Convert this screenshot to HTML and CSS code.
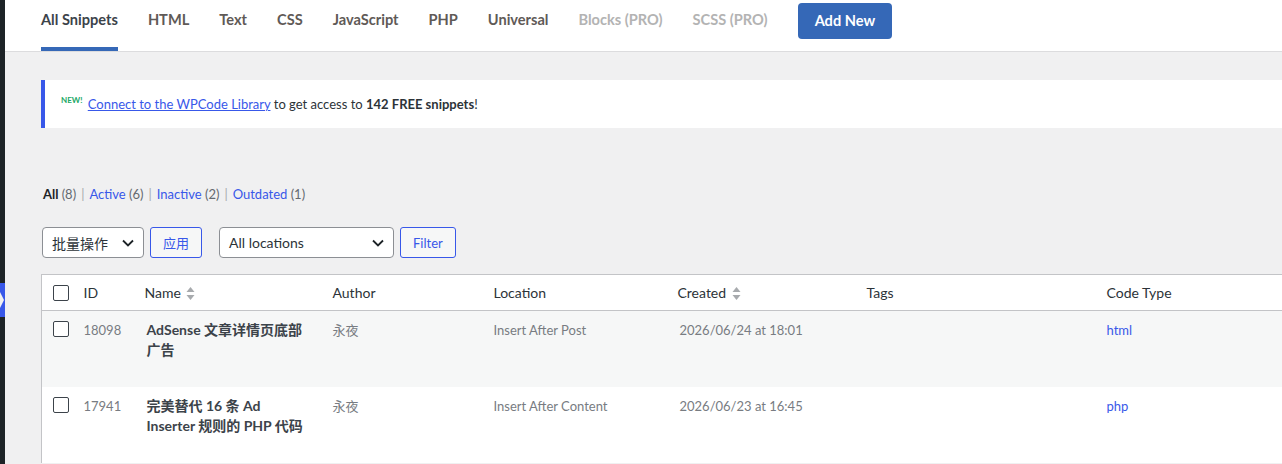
FILE: index.html
```html
<!DOCTYPE html>
<html>
    <head>
        <meta charset="utf-8">
        <title>Code Snippets</title>
        <link rel="stylesheet" href="styles.css">
    </head>
    <body>
        <div class="page">
            <div class="sidebar">
                <svg class="menu-arrow" width="5" height="34" viewBox="0 0 5 34">
                    <rect width="5" height="34" fill="#3858e9"/>
                    <polygon points="0,9 4,17 0,25" fill="#f0f0f1"/>
                </svg>
            </div>
            <div class="main">
                <div class="topbar">
                    <a class="tab active" href="#">All Snippets</a>
                    <a class="tab" href="#">HTML</a>
                    <a class="tab" href="#">Text</a>
                    <a class="tab" href="#">CSS</a>
                    <a class="tab" href="#">JavaScript</a>
                    <a class="tab" href="#">PHP</a>
                    <a class="tab" href="#">Universal</a>
                    <a class="tab pro" href="#">Blocks (PRO)</a>
                    <a class="tab pro" href="#">SCSS (PRO)</a>
                    <a class="add-new" href="#">Add New</a>
                </div>

                <div class="content">
                    <div class="notice">
                        <sup class="new">NEW!</sup>
                        <a href="#">Connect to the WPCode Library</a> to get access to <strong>142 FREE snippets</strong>!
                    </div>

                    <ul class="views">
                        <li class="current">All <span class="count">(8)</span></li>
                        <li><a href="#">Active</a> <span class="count">(6)</span></li>
                        <li><a href="#">Inactive</a> <span class="count">(2)</span></li>
                        <li><a href="#">Outdated</a> <span class="count">(1)</span></li>
                    </ul>

                    <div class="tablenav">
                        <div class="select bulk">
                            <span>批量操作</span>
                            <svg width="12" height="8" viewBox="0 0 12 8"><path d="M1 1.5 6 6.5 11 1.5" fill="none" stroke="#1d2327" stroke-width="1.8"/></svg>
                        </div>
                        <button class="btn">应用</button>
                        <div class="select locations">
                            <span>All locations</span>
                            <svg width="12" height="8" viewBox="0 0 12 8"><path d="M1 1.5 6 6.5 11 1.5" fill="none" stroke="#1d2327" stroke-width="1.8"/></svg>
                        </div>
                        <button class="btn">Filter</button>
                    </div>

                    <table class="snippets">
                        <colgroup>
                            <col class="c-cb">
                            <col class="c-id">
                            <col class="c-name">
                            <col class="c-author">
                            <col class="c-location">
                            <col class="c-created">
                            <col class="c-tags">
                            <col class="c-type">
                        </colgroup>
                        <thead>
                            <tr>
                                <th class="cb"><span class="checkbox"></span></th>
                                <th>ID</th>
                                <th>Name <svg class="sort" width="9" height="15" viewBox="0 0 9 15"><polygon points="0.5,6 4.5,1 8.5,6" fill="#a7aaad"/><polygon points="0.5,9 4.5,14 8.5,9" fill="#a7aaad"/></svg></th>
                                <th>Author</th>
                                <th>Location</th>
                                <th>Created <svg class="sort" width="9" height="15" viewBox="0 0 9 15"><polygon points="0.5,6 4.5,1 8.5,6" fill="#a7aaad"/><polygon points="0.5,9 4.5,14 8.5,9" fill="#a7aaad"/></svg></th>
                                <th>Tags</th>
                                <th>Code Type</th>
                            </tr>
                        </thead>
                        <tbody>
                            <tr class="alt">
                                <td class="cb"><span class="checkbox"></span></td>
                                <td class="muted">18098</td>
                                <td class="name">AdSense 文章详情页底部<br>广告</td>
                                <td class="muted">永夜</td>
                                <td class="muted">Insert After Post</td>
                                <td class="muted date">2026/06/24 at 18:01</td>
                                <td></td>
                                <td><a href="#">html</a></td>
                            </tr>
                            <tr>
                                <td class="cb"><span class="checkbox"></span></td>
                                <td class="muted">17941</td>
                                <td class="name">完美替代 16 条 Ad<br>Inserter 规则的 PHP 代码</td>
                                <td class="muted">永夜</td>
                                <td class="muted">Insert After Content</td>
                                <td class="muted date">2026/06/23 at 16:45</td>
                                <td></td>
                                <td><a href="#">php</a></td>
                            </tr>
                        </tbody>
                    </table>
                </div>
            </div>
        </div>
    </body>
</html>
```

FILE: styles.css
```css
*{
    margin: 0px;
    padding: 0px;
    box-sizing: border-box;
}
html, body{
    height: 100%;
    overflow: hidden;
}
body{
    background-color: #f0f0f1;
    font-family: "Lato", "Noto Sans CJK SC", sans-serif;
    color: #3c434a;
    font-size: 13px;
}
a{
    color: #3858e9;
}
.page{
    display: flex;
    height: 100%;
}
.sidebar{
    width: 5px;
    flex: none;
    background-color: #1d2327;
    padding-top: 283px;
}
.menu-arrow{
    display: block;
}
.main{
    flex: 1;
    min-width: 0;
}

/* header tabs */
.topbar{
    display: flex;
    gap: 30px;
    padding-left: 36px;
    background-color: #fff;
    border-bottom: 1px solid #dcdcde;
    height: 52px;
}
.tab{
    display: block;
    padding-top: 10px;
    height: 51px;
    line-height: 20px;
    font-size: 14.6px;
    font-weight: 700;
    color: #5f5a57;
    text-decoration: none;
    border-bottom: 4px solid transparent;
    padding-bottom: 16px;
}
.tab.active{
    color: #3c434a;
    border-bottom-color: #3568b7;
}
.tab.pro{
    color: #b3b3b3;
}
.add-new{
    align-self: flex-start;
    margin-top: 3px;
    height: 36px;
    line-height: 36px;
    padding: 0px 17px;
    background-color: #3568b7;
    border-radius: 4px;
    color: #fff;
    font-size: 14.6px;
    font-weight: 700;
    text-decoration: none;
}

.content{
    padding-left: 36px;
    width: 1340px;
}

/* library notice */
.notice{
    margin-top: 28px;
    background-color: #fff;
    border-left: 4px solid #3858e9;
    padding: 15px 16px;
    height: 48px;
    line-height: 18px;
    font-size: 13px;
    color: #2c3338;
}
.notice .new{
    color: #1da867;
    font-size: 8px;
    font-weight: 700;
    line-height: 0px;
    vertical-align: 6px;
    margin-right: 2px;
}

/* status views */
.views{
    list-style: none;
    display: flex;
    margin-top: 52px;
    margin-left: 2px;
    line-height: 28px;
    font-size: 13px;
}
.views li + li::before{
    content: "|";
    color: #a7aaad;
    margin: 0px 5px 0px 5px;
}
.views a{
    text-decoration: none;
}
.views .current{
    font-weight: 700;
    color: #1d2327;
}
.views .count{
    color: #646970;
    font-weight: 400;
}

/* bulk actions */
.tablenav{
    display: flex;
    margin-top: 19px;
    margin-left: 1px;
    height: 31px;
}
.select{
    display: flex;
    align-items: center;
    justify-content: space-between;
    height: 31px;
    border: 1px solid #8c8f94;
    border-radius: 4px;
    background-color: #fff;
    font-size: 14px;
    color: #2c3338;
    padding: 0px 9px 0px 9px;
}
.select.bulk{
    width: 102px;
}
.select.locations{
    width: 175px;
    margin-left: 17px;
}
.btn{
    height: 31px;
    margin-left: 6px;
    padding: 0px 12px;
    border: 1px solid #3858e9;
    border-radius: 3px;
    background-color: #f6f7f7;
    color: #3858e9;
    font-family: inherit;
    font-size: 13px;
}

/* snippets table */
.snippets{
    margin-top: 16px;
    width: 1310px;
    table-layout: fixed;
    border-collapse: collapse;
    border-left: 1px solid #c3c4c7;
    border-top: 1px solid #c3c4c7;
}
.c-cb{ width: 34px; }
.c-id{ width: 61px; }
.c-name{ width: 188px; }
.c-author{ width: 161px; }
.c-location{ width: 184px; }
.c-created{ width: 189px; }
.c-tags{ width: 240px; }
.snippets thead tr{
    background-color: #fff;
    border-bottom: 1px solid #c3c4c7;
}
.snippets th{
    height: 36px;
    text-align: left;
    font-weight: 400;
    font-size: 14px;
    color: #2c3338;
    padding-left: 8px;
    vertical-align: middle;
}
.sort{
    vertical-align: -3px;
    margin-left: 2px;
}
.snippets td{
    vertical-align: top;
    padding: 9px 8px 0px 8px;
    height: 76px;
    line-height: 20px;
    font-size: 13px;
}
.snippets tbody tr{
    background-color: #fff;
}
.snippets tbody tr.alt{
    background-color: #f6f7f7;
}
.snippets .cb{
    padding: 0px 0px 0px 11px;
}
.snippets td.cb{
    padding-top: 10px;
}
.checkbox{
    display: block;
    width: 16px;
    height: 16px;
    border: 1px solid #3c434a;
    border-radius: 2px;
    background-color: #fff;
}
.muted{
    color: #787c82;
}
.snippets td.name{
    font-size: 14px;
    font-weight: 700;
    color: #3c434a;
    padding-left: 10px;
}
.snippets td.date{
    padding-left: 10px;
}
.snippets td a{
    text-decoration: none;
}
```
